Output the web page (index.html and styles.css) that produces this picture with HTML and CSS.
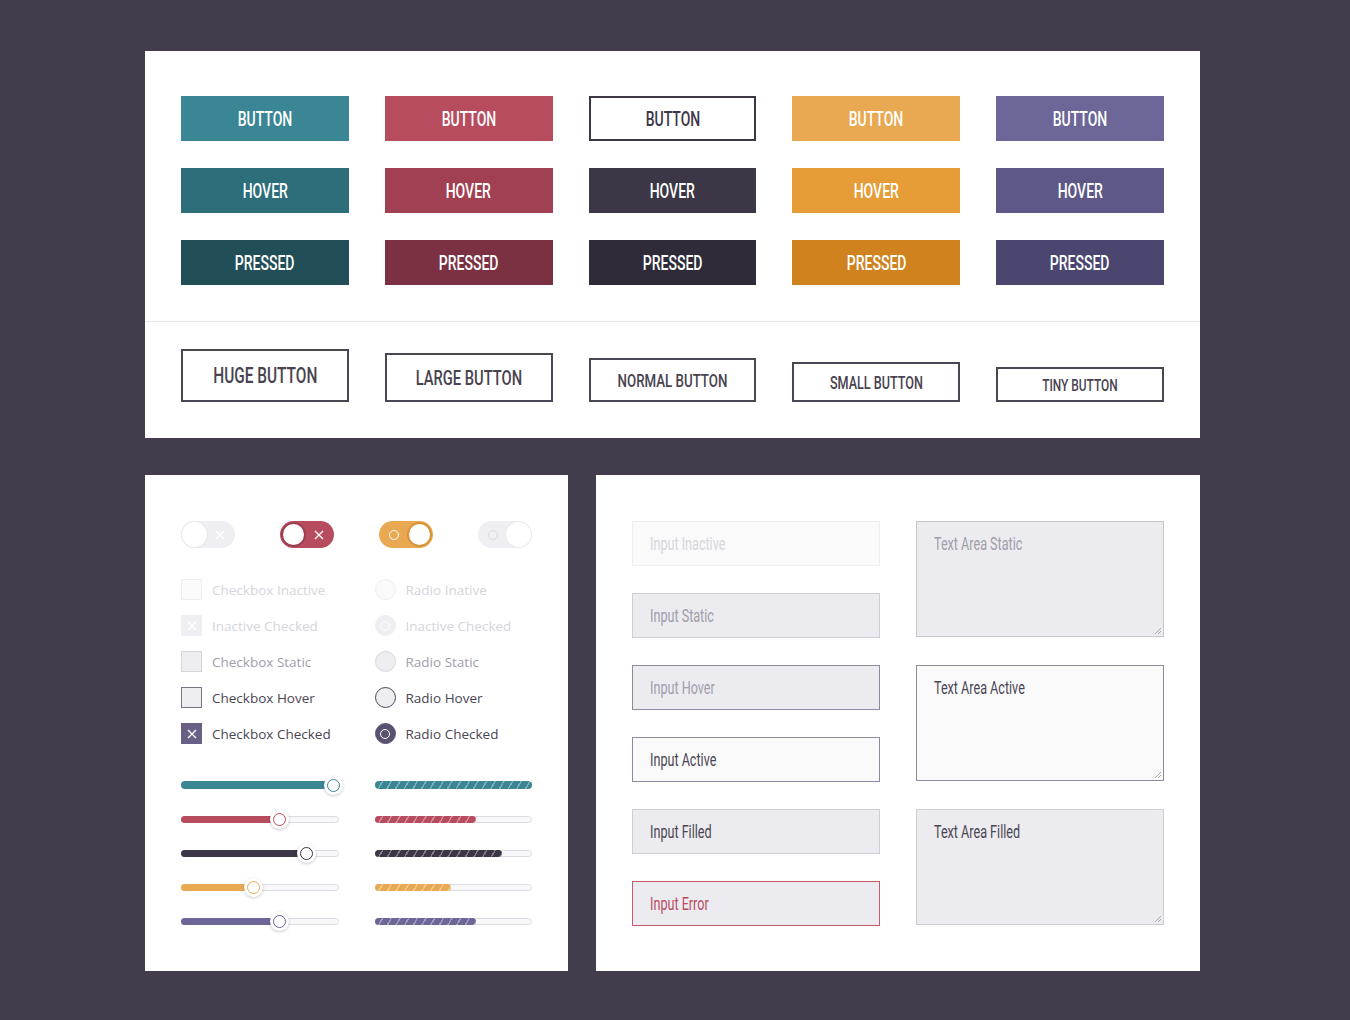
FILE: index.html
```html
<!DOCTYPE html>
<html lang="en">
<head>
    <meta charset="UTF-8">
    <meta name="viewport" content="width=device-width, initial-scale=1.0">
    <title>UI Kit</title>
    <link rel="stylesheet" href="styles.css">
</head>
<body>
    <div class="board">
        <!-- button states & sizes -->
        <section class="card buttons">
            <div class="variants">
                <button class="btn teal"><span class="t">BUTTON</span></button>
                <button class="btn red"><span class="t">BUTTON</span></button>
                <button class="btn outline"><span class="t">BUTTON</span></button>
                <button class="btn orange"><span class="t">BUTTON</span></button>
                <button class="btn purple"><span class="t">BUTTON</span></button>

                <button class="btn teal hover"><span class="t">HOVER</span></button>
                <button class="btn red hover"><span class="t">HOVER</span></button>
                <button class="btn outline hover"><span class="t">HOVER</span></button>
                <button class="btn orange hover"><span class="t">HOVER</span></button>
                <button class="btn purple hover"><span class="t">HOVER</span></button>

                <button class="btn teal pressed"><span class="t">PRESSED</span></button>
                <button class="btn red pressed"><span class="t">PRESSED</span></button>
                <button class="btn outline pressed"><span class="t">PRESSED</span></button>
                <button class="btn orange pressed"><span class="t">PRESSED</span></button>
                <button class="btn purple pressed"><span class="t">PRESSED</span></button>
            </div>
            <div class="sizes">
                <button class="btn ghost huge"><span class="t">HUGE BUTTON</span></button>
                <button class="btn ghost large"><span class="t">LARGE BUTTON</span></button>
                <button class="btn ghost normal"><span class="t">NORMAL BUTTON</span></button>
                <button class="btn ghost small"><span class="t">SMALL BUTTON</span></button>
                <button class="btn ghost tiny"><span class="t">TINY BUTTON</span></button>
            </div>
        </section>

        <!-- toggles, checkboxes, radios, sliders -->
        <section class="card controls">
            <div class="toggles">
                <span class="toggle muted">
                    <span class="knob"></span>
                    <svg class="mark" width="10" height="10" viewBox="0 0 10 10"><path d="M1 1l8 8M9 1l-8 8"/></svg>
                </span>
                <span class="toggle red">
                    <span class="knob"></span>
                    <svg class="mark" width="10" height="10" viewBox="0 0 10 10"><path d="M1 1l8 8M9 1l-8 8"/></svg>
                </span>
                <span class="toggle orange">
                    <span class="ring"></span>
                    <span class="knob"></span>
                </span>
                <span class="toggle muted">
                    <span class="ring"></span>
                    <span class="knob"></span>
                </span>
            </div>

            <div class="choices">
                <label class="choice inactive"><span class="box"></span>Checkbox Inactive</label>
                <label class="choice inactive"><span class="dot"></span>Radio Inative</label>

                <label class="choice inactive"><span class="box checked"><svg width="10" height="10" viewBox="0 0 10 10"><path d="M1 1l8 8M9 1l-8 8"/></svg></span>Inactive Checked</label>
                <label class="choice inactive"><span class="dot checked"><i></i></span>Inactive Checked</label>

                <label class="choice static"><span class="box"></span>Checkbox Static</label>
                <label class="choice static"><span class="dot"></span>Radio Static</label>

                <label class="choice hover"><span class="box"></span>Checkbox Hover</label>
                <label class="choice hover"><span class="dot"></span>Radio Hover</label>

                <label class="choice on"><span class="box checked"><svg width="10" height="10" viewBox="0 0 10 10"><path d="M1 1l8 8M9 1l-8 8"/></svg></span>Checkbox Checked</label>
                <label class="choice on"><span class="dot checked"><i></i></span>Radio Checked</label>
            </div>

            <div class="ranges">
                <div class="slider teal full"><span class="track"><span class="fill" style="width: 100%"></span><span class="thumb" style="left: 97%"></span></span></div>
                <div class="progress teal full"><span class="track"><span class="fill" style="width: 100%"></span></span></div>

                <div class="slider red"><span class="track"><span class="fill" style="width: 63%"></span><span class="thumb" style="left: 63%"></span></span></div>
                <div class="progress red"><span class="track"><span class="fill" style="width: 65%"></span></span></div>

                <div class="slider dark"><span class="track"><span class="fill" style="width: 80%"></span><span class="thumb" style="left: 80%"></span></span></div>
                <div class="progress dark"><span class="track"><span class="fill" style="width: 82%"></span></span></div>

                <div class="slider orange"><span class="track"><span class="fill" style="width: 46%"></span><span class="thumb" style="left: 46%"></span></span></div>
                <div class="progress orange"><span class="track"><span class="fill" style="width: 49%"></span></span></div>

                <div class="slider purple"><span class="track"><span class="fill" style="width: 63%"></span><span class="thumb" style="left: 63%"></span></span></div>
                <div class="progress purple"><span class="track"><span class="fill" style="width: 65%"></span></span></div>
            </div>
        </section>

        <!-- text inputs -->
        <section class="card fields">
            <div class="inputs">
                <div class="field inactive"><span class="t">Input Inactive</span></div>
                <div class="field static"><span class="t">Input Static</span></div>
                <div class="field hover"><span class="t">Input Hover</span></div>
                <div class="field active"><span class="t">Input Active</span></div>
                <div class="field filled"><span class="t">Input Filled</span></div>
                <div class="field error"><span class="t">Input Error</span></div>
            </div>
            <div class="areas">
                <div class="field area static">
                    <span class="t">Text Area Static</span>
                    <svg class="grip" width="9" height="9" viewBox="0 0 9 9"><path d="M8 2L2 8M8 5L5 8"/></svg>
                </div>
                <div class="field area active">
                    <span class="t">Text Area Active</span>
                    <svg class="grip" width="9" height="9" viewBox="0 0 9 9"><path d="M8 2L2 8M8 5L5 8"/></svg>
                </div>
                <div class="field area filled">
                    <span class="t">Text Area Filled</span>
                    <svg class="grip" width="9" height="9" viewBox="0 0 9 9"><path d="M8 2L2 8M8 5L5 8"/></svg>
                </div>
            </div>
        </section>
    </div>
</body>
</html>
```

FILE: styles.css
```css
:root {
    --bg-page: #433c4d;
    --ink: #4a4552;
    --ink-soft: #a19dab;
    --ink-faint: #d6d4db;
    --field-bg: #ecebef;
    --field-line: #cfcdd4;
    --field-focus: #8e89a1;

    --teal: #3a8694;
    --red: #b84c5f;
    --dark: #3c3646;
    --orange: #e9a953;
    --purple: #6c6699;

    --display: Roboto, "DejaVu Sans Condensed", sans-serif;
    --body: "Open Sans", "Noto Sans", sans-serif;
}

body {
    margin: 0;
    background: var(--bg-page);
    font-family: var(--body);
}

.board {
    width: 1055px;
    margin-left: 145px;
    padding: 51px 0 50px;
    display: grid;
    grid-template-columns: 423px 1fr;
    gap: 37px 28px;
}

.card {
    background: #fff;
}

/* narrow display lettering */
.t {
    display: inline-block;
    white-space: nowrap;
    transform: scaleX(0.7);
}

/* Buttons */
.buttons {
    grid-column: 1 / -1;
}

.variants {
    display: grid;
    grid-template-columns: repeat(5, 1fr);
    gap: 27px 36px;
    padding: 45px 36px 36px;
    border-bottom: 1px solid #e6e5ea;
}

.sizes {
    display: grid;
    grid-template-columns: repeat(5, 1fr);
    column-gap: 36px;
    align-items: end;
    padding: 27px 36px 36px;
}

.btn {
    box-sizing: border-box;
    height: 45px;
    margin: 0;
    padding: 0;
    border: 0;
    border-radius: 0;
    color: #fff;
    font-family: var(--display);
    font-weight: 500;
    font-size: 20px;
    cursor: pointer;
}

.btn.teal { background: var(--teal); }
.btn.teal.hover { background: #2e6e7a; }
.btn.teal.pressed { background: #224f57; }

.btn.red { background: var(--red); }
.btn.red.hover { background: #a24053; }
.btn.red.pressed { background: #7b3142; }

.btn.outline {
    background: #fff;
    border: 2px solid var(--dark);
    color: var(--dark);
}
.btn.outline.hover { background: var(--dark); color: #fff; }
.btn.outline.pressed { background: #302b39; border-color: #302b39; color: #fff; }

.btn.orange { background: var(--orange); }
.btn.orange.hover { background: #e69c37; }
.btn.orange.pressed { background: #d0821f; }

.btn.purple { background: var(--purple); }
.btn.purple.hover { background: #5e5889; }
.btn.purple.pressed { background: #4a4670; }

.btn.ghost {
    background: #fff;
    border: 2px solid #4b4654;
    color: #48434f;
}
.btn.huge { height: 53px; font-size: 22px; }
.btn.large { height: 49px; font-size: 21px; }
.btn.normal { height: 44px; font-size: 19px; }
.btn.small { height: 40px; font-size: 18px; }
.btn.tiny { height: 35px; font-size: 17px; }

/* Toggles, checkboxes, radios */
.controls {
    padding: 46px 36px 39px;
}

.toggles {
    display: flex;
    justify-content: space-between;
}

.toggle {
    box-sizing: border-box;
    width: 54px;
    height: 27px;
    padding: 1px;
    border-radius: 14px;
    display: flex;
    align-items: center;
    justify-content: space-between;
}

.toggle .knob {
    box-sizing: border-box;
    width: 25px;
    height: 25px;
    border-radius: 50%;
    background: #fff;
}

.toggle .mark {
    margin-right: 9px;
    stroke: #fff;
    stroke-width: 1.3;
    fill: none;
}

.toggle .ring {
    box-sizing: border-box;
    width: 10px;
    height: 10px;
    margin-left: 9px;
    border: 1.3px solid #fff;
    border-radius: 50%;
}

.toggle.muted { background: #efeef2; }
.toggle.muted .knob { box-shadow: 0 0 0 1px #e9e8ed; }
.toggle.muted .ring { border-color: #dcdae1; }
.toggle.red { background: var(--red); }
.toggle.red .knob { border: 2px solid #9e3e50; }
.toggle.orange { background: var(--orange); }
.toggle.orange .knob { border: 2px solid #d99236; }

.choices {
    display: grid;
    grid-template-columns: 1fr 1fr;
    gap: 15px 36px;
    margin-top: 31px;
}

.choice {
    display: flex;
    align-items: center;
    gap: 10px;
    height: 21px;
    font-size: 13.5px;
    white-space: nowrap;
}

.box,
.dot {
    box-sizing: border-box;
    flex: none;
    width: 21px;
    height: 21px;
    display: flex;
    align-items: center;
    justify-content: center;
    border: 1px solid transparent;
}

.dot {
    border-radius: 50%;
}

.box svg {
    stroke: #fff;
    stroke-width: 1.3;
    fill: none;
}

.dot i {
    box-sizing: border-box;
    width: 10px;
    height: 10px;
    border: 1.3px solid #fff;
    border-radius: 50%;
}

.choice.inactive { color: var(--ink-faint); }
.choice.inactive .box,
.choice.inactive .dot { background: #fafafb; border-color: #efeef2; }
.choice.inactive .checked { background: #efeef2; }

.choice.static { color: var(--ink-soft); }
.choice.static .box,
.choice.static .dot { background: #eeedf1; border-color: #d7d5dc; }

.choice.hover { color: var(--ink); }
.choice.hover .box,
.choice.hover .dot { background: #eeedf1; border-color: #77727f; }
.choice.hover .dot { border-color: #4a4552; }

.choice.on { color: var(--ink); }
.choice.on .box { background: #6a5f85; border-color: #6a5f85; }
.choice.on .dot { background: #5b5272; border-color: #5b5272; }

/* Sliders & progress */
.ranges {
    display: grid;
    grid-template-columns: 1fr 1fr;
    gap: 14px 36px;
    margin-top: 31px;
}

.slider,
.progress {
    height: 20px;
    display: flex;
    align-items: center;
}

.track {
    position: relative;
    box-sizing: border-box;
    width: 100%;
    height: 7px;
    border: 1px solid #dddbe2;
    border-radius: 4px;
    background: #f8f8fa;
}

.fill {
    position: absolute;
    left: -1px;
    top: -1px;
    bottom: -1px;
    border-radius: 4px;
}

.progress .fill {
    background-image: repeating-linear-gradient(120deg, transparent 0 6px, rgba(255, 255, 255, 0.35) 6px 7.5px);
}

.thumb {
    position: absolute;
    top: 50%;
    width: 19px;
    height: 19px;
    margin: -9.5px 0 0 -9.5px;
    border-radius: 50%;
    background: #fff;
    box-shadow: 0 1px 3px rgba(40, 30, 50, 0.25);
}

.thumb::after {
    content: "";
    position: absolute;
    inset: 3px;
    border: 1.3px solid currentColor;
    border-radius: 50%;
}

.full .track { height: 8px; border: 0; }
.full .fill { left: 0; top: 0; bottom: 0; }

.teal .fill { background-color: var(--teal); }
.red .fill { background-color: var(--red); }
.dark .fill { background-color: var(--dark); }
.orange .fill { background-color: var(--orange); }
.purple .fill { background-color: var(--purple); }

.teal .thumb { color: var(--teal); }
.red .thumb { color: var(--red); }
.dark .thumb { color: var(--dark); }
.orange .thumb { color: var(--orange); }
.purple .thumb { color: var(--purple); }

/* Text inputs */
.fields {
    display: grid;
    grid-template-columns: 1fr 1fr;
    column-gap: 36px;
    padding: 46px 36px 45px;
}

.inputs {
    display: flex;
    flex-direction: column;
    gap: 27px;
}

.areas {
    display: flex;
    flex-direction: column;
    gap: 28px;
}

.field {
    position: relative;
    box-sizing: border-box;
    height: 45px;
    padding: 0 17px;
    display: flex;
    align-items: center;
    border: 1px solid var(--field-line);
    background: var(--field-bg);
    color: var(--ink-soft);
    font-family: var(--display);
    font-size: 18px;
}

.field .t {
    transform-origin: left center;
}

.field.area {
    height: 116px;
    padding-top: 11px;
    align-items: flex-start;
}

.grip {
    position: absolute;
    right: 1px;
    bottom: 1px;
    stroke: #a9a6b0;
    stroke-width: 1;
    fill: none;
}

.field.inactive { background: #fafafa; border-color: #efeef1; color: #d7d5db; }
.field.static { color: var(--ink-soft); }
.field.area.static { border-color: #c8c6cd; }
.field.hover { border-color: var(--field-focus); }
.field.active { background: #fafafb; border-color: var(--field-focus); color: var(--ink); }
.field.filled { color: var(--ink); }
.field.error { border-color: #c9586c; color: var(--red); }
```
